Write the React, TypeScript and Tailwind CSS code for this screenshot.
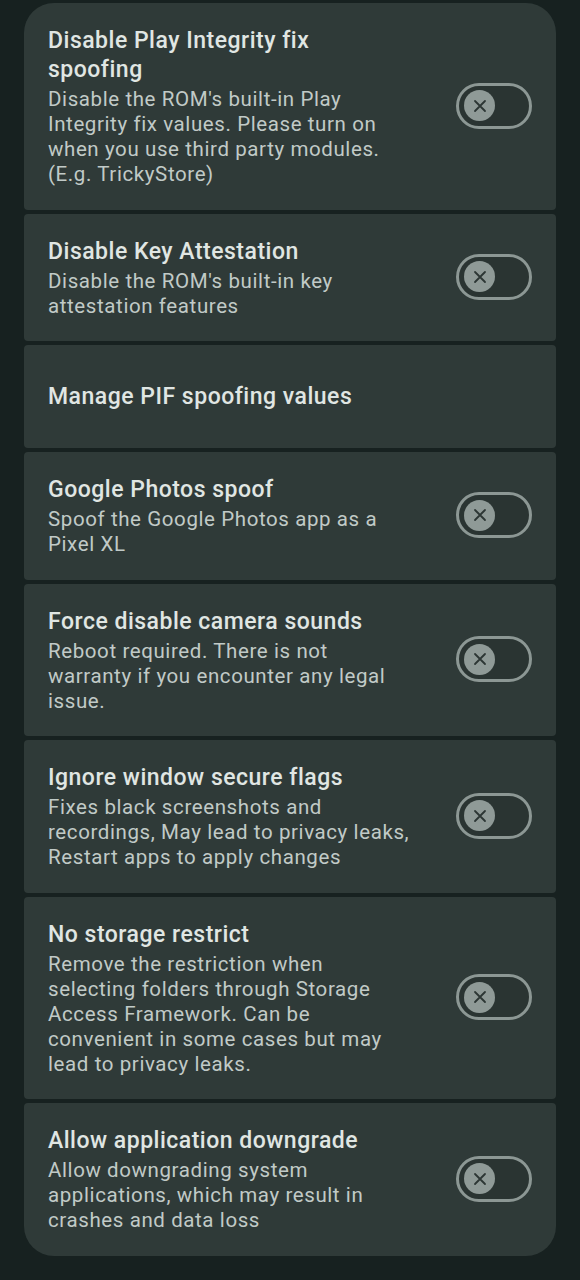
import React from "react";

type Item = {
  title: string[];
  desc?: string[];
  toggle?: boolean;
  h?: string;
};

const items: Item[] = [
  {
    title: ["Disable Play Integrity fix", "spoofing"],
    desc: [
      "Disable the ROM's built-in Play",
      "Integrity fix values. Please turn on",
      "when you use third party modules.",
      "(E.g. TrickyStore)",
    ],
    toggle: true,
  },
  {
    title: ["Disable Key Attestation"],
    desc: ["Disable the ROM's built-in key", "attestation features"],
    toggle: true,
  },
  { title: ["Manage PIF spoofing values"], toggle: false, h: "h-[103px]" },
  {
    title: ["Google Photos spoof"],
    desc: ["Spoof the Google Photos app as a", "Pixel XL"],
    toggle: true,
  },
  {
    title: ["Force disable camera sounds"],
    desc: [
      "Reboot required. There is not",
      "warranty if you encounter any legal",
      "issue.",
    ],
    toggle: true,
  },
  {
    title: ["Ignore window secure flags"],
    desc: [
      "Fixes black screenshots and",
      "recordings, May lead to privacy leaks,",
      "Restart apps to apply changes",
    ],
    toggle: true,
  },
  {
    title: ["No storage restrict"],
    desc: [
      "Remove the restriction when",
      "selecting folders through Storage",
      "Access Framework. Can be",
      "convenient in some cases but may",
      "lead to privacy leaks.",
    ],
    toggle: true,
  },
  {
    title: ["Allow application downgrade"],
    desc: [
      "Allow downgrading system",
      "applications, which may result in",
      "crashes and data loss",
    ],
    toggle: true,
  },
];

function Toggle() {
  return (
    <div className="w-[76px] h-[46px] rounded-full border-[3px] border-[#8c9794] bg-[#2a3432] flex items-center pl-[5px] shrink-0 -mt-[2px]">
      <div className="w-[31px] h-[31px] rounded-full bg-[#8f9a97] flex items-center justify-center">
        <svg width="16" height="16" viewBox="0 0 16 16" fill="none">
          <path
            d="M3 3L13 13M13 3L3 13"
            stroke="#2c3634"
            strokeWidth="1.8"
            strokeLinecap="round"
          />
        </svg>
      </div>
    </div>
  );
}

export default function App() {
  return (
    <div
      className="w-[580px] h-[1280px] bg-[#172120] pt-[3px] px-[24px]"
      style={{ fontFamily: "Roboto, 'Noto Sans', sans-serif" }}
    >
      <div className="flex flex-col gap-[4px]">
        {items.map((it, i) => {
          const first = i === 0;
          const last = i === items.length - 1;
          return (
            <div
              key={i}
              className={
                "bg-[#2f3a38] flex items-center justify-between pl-[24px] pr-[24px] pt-[23px] pb-[22.5px] " +
                (first
                  ? "rounded-t-[30px] rounded-b-[4px] "
                  : last
                  ? "rounded-b-[30px] rounded-t-[4px] "
                  : "rounded-[4px] ") +
                (it.h ?? "")
              }
            >
              <div className="flex flex-col">
                <div className="text-[23px] leading-[29px] tracking-[0.5px] font-medium text-[#e0e6e3] whitespace-nowrap">
                  {it.title.map((t, j) => (
                    <div key={j}>{t}</div>
                  ))}
                </div>
                {it.desc && (
                  <div className="mt-[3px] text-[20.5px] leading-[25px] tracking-[0.6px] text-[#c1cac7] whitespace-nowrap">
                    {it.desc.map((t, j) => (
                      <div key={j}>{t}</div>
                    ))}
                  </div>
                )}
              </div>
              {it.toggle && <Toggle />}
            </div>
          );
        })}
      </div>
    </div>
  );
}
